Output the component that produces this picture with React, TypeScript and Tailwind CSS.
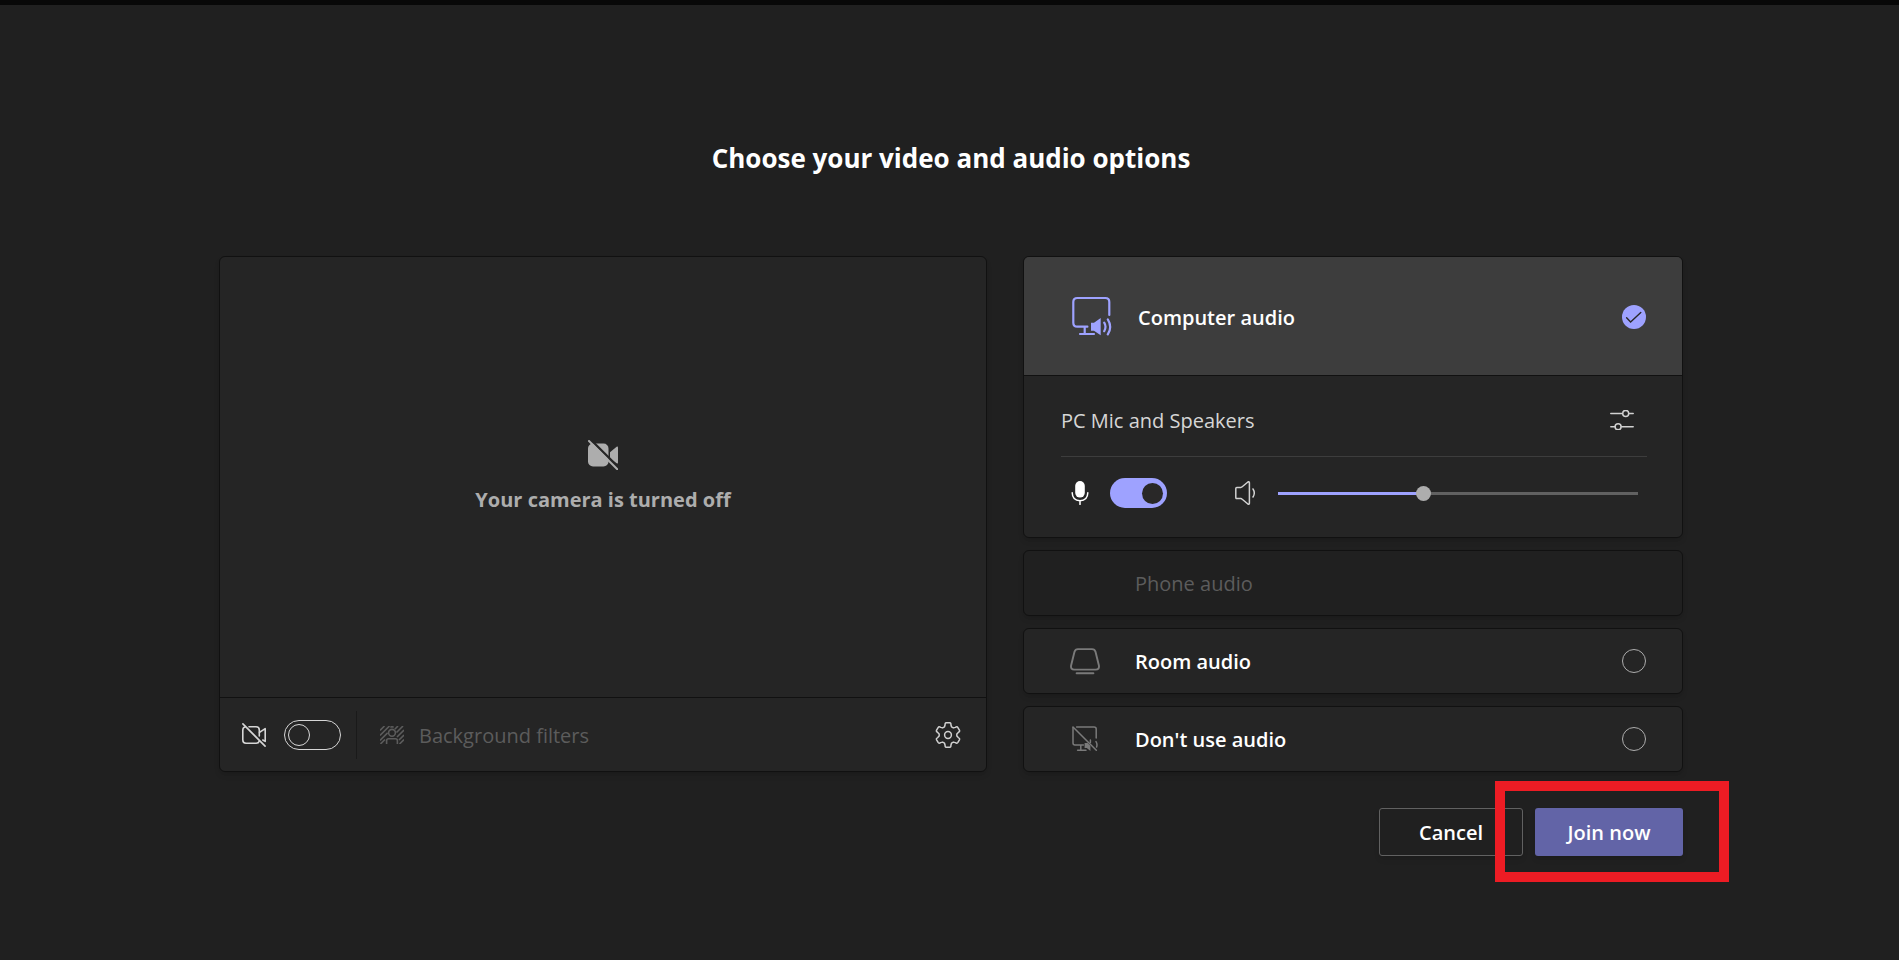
import { useState, type ReactNode } from "react";

function CameraOffFilled() {
  return (
    <svg width="30" height="30" viewBox="0 0 30 30" aria-hidden="true">
      <rect x="0" y="3.5" width="20.5" height="23" rx="5" fill="#adadad" />
      <path d="M22 12.2 28.6 6.8Q30 6 30 7.6V22.6Q30 24.2 28.6 23.3L22 18.5Z" fill="#adadad" />
      <path d="M2.5 -.5 30.5 27.5" stroke="#252525" strokeWidth="2.4" />
      <path d="M1 1 29.3 29.3" stroke="#adadad" strokeWidth="2" strokeLinecap="round" />
    </svg>
  );
}

function CameraOff() {
  return (
    <svg width="24" height="24" viewBox="0 0 24 24" fill="none" stroke="#d6d6d6" strokeWidth="1.6" strokeLinecap="round" strokeLinejoin="round" aria-hidden="true">
      <path d="M.9 .9 23.1 23.1" />
      <path d="M3 4Q.8 4.6 .8 7V17Q.8 20.2 4 20.2H14.2Q16.6 20.2 17.2 18.2" />
      <path d="M7 3.8H14Q17.3 3.8 17.3 7V13" />
      <path d="M17.5 9.4 23.2 5.6V18.4L20.8 17" />
    </svg>
  );
}

function BackgroundFilters() {
  return (
    <svg width="24" height="18" viewBox="0 0 24 18" fill="none" stroke="#5c5c5c" strokeWidth="1.6" aria-hidden="true">
      <path d="M0 4.5 4.5 0M0 9.5 9.5 0M0 14.5 7.6 6.9M.5 18 5 13.5M14.8 3.2 18 0M16.5 6.5 23 0M17 11 24 4M19 14 24 9M19.5 18 24 13.5" />
      <path d="M10.4 1.4Q12 .2 13.6 1.4" />
      <circle cx="12" cy="6.8" r="3.4" />
      <path d="M6.6 18V14.8Q6.6 12.8 8.6 12.8H15.4Q17.4 12.8 17.4 14.8V18" />
    </svg>
  );
}

function gearOutline() {
  const point = (radius: number, degrees: number) => {
    const a = (degrees * Math.PI) / 180;
    return `${(13 + radius * Math.cos(a)).toFixed(2)} ${(13 + radius * Math.sin(a)).toFixed(2)}`;
  };
  let d = "";
  for (let i = 0; i < 6; i++) {
    const a = i * 60 - 90;
    d += `${i === 0 ? "M" : "L"}${point(8.9, a - 23)}L${point(10.6, a - 16)}Q${point(12.6, a - 14)} ${point(12.4, a - 7)}L${point(12.4, a + 7)}Q${point(12.6, a + 14)} ${point(10.6, a + 16)}L${point(8.9, a + 23)}`;
  }
  return d + "Z";
}

function Gear() {
  return (
    <svg width="26" height="26" viewBox="0 0 26 26" fill="none" stroke="#d1d1d1" strokeWidth="1.5" strokeLinejoin="round" aria-hidden="true">
      <path d={gearOutline()} />
      <circle cx="13" cy="13" r="3.4" />
    </svg>
  );
}

function ComputerAudio() {
  return (
    <svg width="42" height="42" viewBox="0 0 42 42" fill="none" stroke="#9ea2ff" strokeWidth="2.2" strokeLinecap="round" aria-hidden="true">
      <path d="M38.3 19V6Q38.3 2 34.3 2H6.3Q2.3 2 2.3 6V26.7Q2.3 30.7 6.3 30.7H16.4" />
      <path d="M13.7 31V37.5M9 38H23" />
      <path d="M20 26.7H23L29.7 22V39.3L23 34.7H20Z" fill="#9ea2ff" stroke="none" />
      <path d="M33.2 26.6Q35.8 30.8 33.2 35.2M36.8 23.4Q41.6 31 36.8 38.4" />
    </svg>
  );
}

function RoomAudio() {
  return (
    <svg width="30" height="27" viewBox="0 0 30 27" fill="none" stroke="#7a7a7a" strokeWidth="1.9" strokeLinecap="round" aria-hidden="true">
      <path d="M8 1.1H22Q24.8 1.1 25.5 3.8L28.9 17.4Q29.6 21.6 25.6 21.6H4.4Q.4 21.6 1.1 17.4L4.5 3.8Q5.2 1.1 8 1.1Z" />
      <path d="M6.6 25.2H23.4" />
    </svg>
  );
}

function NoAudio() {
  return (
    <svg width="26" height="26" viewBox="0 0 26 26" fill="none" stroke="#7a7a7a" strokeWidth="1.5" strokeLinecap="round" aria-hidden="true">
      <path d="M1 1 24.3 24.3" />
      <path d="M4.6 1H22Q24.2 1 24.2 3V12" />
      <path d="M1 1.5V17Q1 19 3 19H11.4M8.8 19V24M5.6 24.2H14" />
      <path d="M12.6 17H15.6L18.4 19.8V25L14.8 22H12.6Z" fill="#7a7a7a" stroke="none" />
      <path d="M18.4 14V16.4M24 15.6Q25.6 18 24.6 21" />
    </svg>
  );
}

function DeviceSettings() {
  return (
    <svg width="24" height="20" viewBox="0 0 24 20" fill="none" stroke="#d1d1d1" strokeWidth="1.5" strokeLinecap="round" aria-hidden="true">
      <path d="M.8 3.4H12.4M19 3.4H23.2M.8 16.8H4.8M11.4 16.8H23.2" />
      <circle cx="15.7" cy="3.4" r="3" />
      <circle cx="8.1" cy="16.8" r="3" />
    </svg>
  );
}

function Microphone() {
  return (
    <svg width="18" height="24" viewBox="0 0 18 24" fill="none" stroke="#fff" strokeWidth="1.5" strokeLinecap="round" aria-hidden="true">
      <rect x="4.2" y="0" width="9.6" height="16.6" rx="4.8" fill="#fff" stroke="none" />
      <path d="M1.2 11.8Q1.4 19.6 9 19.8Q16.6 19.6 16.8 11.8M9 20V23.4" />
    </svg>
  );
}

function Speaker() {
  return (
    <svg width="22" height="24" viewBox="0 0 22 24" fill="none" stroke="#d1d1d1" strokeWidth="1.5" strokeLinecap="round" strokeLinejoin="round" aria-hidden="true">
      <path d="M1.8 6.4H5.8Q6.6 6.4 7.2 5.8L12.9 1Q14.4 .2 14.4 1.8V22.2Q14.4 23.8 12.9 23L7.2 18.2Q6.6 17.6 5.8 17.6H1.8Q.8 17.6 .8 16.6V7.4Q.8 6.4 1.8 6.4Z" />
      <path d="M18 8Q20.6 12 18 16" />
    </svg>
  );
}

function CheckedMark() {
  return (
    <svg width="24" height="24" viewBox="0 0 24 24" fill="none" aria-hidden="true">
      <circle cx="12" cy="12" r="12" fill="#9ea2ff" />
      <path d="M4.6 12.8 8.6 17 18.8 7.4" stroke="#292828" strokeWidth="1.4" strokeLinecap="round" />
    </svg>
  );
}

function Toggle({ label, checked, onChange }: { label: string; checked: boolean; onChange: (value: boolean) => void }) {
  return (
    <button
      type="button"
      role="switch"
      aria-label={label}
      aria-checked={checked}
      onClick={() => onChange(!checked)}
      className={
        checked
          ? "flex h-[30px] w-[57px] shrink-0 items-center justify-end rounded-full bg-[#9ea2ff] px-1"
          : "flex h-[30px] w-[57px] shrink-0 items-center rounded-full border border-[#d6d6d6] px-[3px]"
      }
    >
      <span className={checked ? "size-[21px] rounded-full bg-[#292828]" : "size-[22px] rounded-full border border-[#d6d6d6]"} />
    </button>
  );
}

function AudioOption({
  label,
  value,
  selected,
  disabled = false,
  icon,
  onSelect,
}: {
  label: string;
  value: string;
  selected: string;
  disabled?: boolean;
  icon?: ReactNode;
  onSelect: (value: string) => void;
}) {
  const checked = selected === value;
  return (
    <label
      className={
        disabled
          ? "flex h-[66px] items-center rounded-md border border-[#111] bg-[#202020] pr-9 pl-[42px] text-[#5c5c5c] shadow-md"
          : "flex h-[66px] items-center rounded-md border border-[#111] bg-[#252525] pr-9 pl-[42px] font-semibold text-white shadow-md"
      }
    >
      <span className="flex w-[38px] shrink-0 justify-center">{icon}</span>
      <span className="grow pt-0.5 pl-[31px]">{label}</span>
      <input
        type="radio"
        name="audio"
        value={value}
        checked={checked}
        disabled={disabled}
        onChange={() => onSelect(value)}
        className="size-6 appearance-none rounded-full border border-[#adadad] disabled:invisible"
      />
    </label>
  );
}

export default function App() {
  const [camera, setCamera] = useState(false);
  const [mic, setMic] = useState(true);
  const [volume, setVolume] = useState(40);
  const [audio, setAudio] = useState("computer");

  return (
    <div className="min-h-screen border-t-[5px] border-[#080808] bg-[#202020] pb-10 pl-[3px] font-['Open_Sans','Noto_Sans',sans-serif] text-[20px] leading-7 text-white">
      <main className="mx-auto max-w-[1464px] pt-[135px]">
        <h1 className="text-center text-[26px] leading-9 font-bold">Choose your video and audio options</h1>

        <div className="mt-20 flex gap-9">
          <section aria-label="Video" className="flex grow flex-col rounded-md border border-[#111] bg-[#252525] shadow-md">
            <div className="flex grow flex-col items-center justify-center gap-4 font-bold text-[#adadad]">
              <CameraOffFilled />
              <p>Your camera is turned off</p>
            </div>
            <div className="flex h-[74px] items-center border-t border-[#111] pt-px pr-[25px] pl-[22px]">
              <CameraOff />
              <div className="ml-[18px] flex">
                <Toggle label="Camera" checked={camera} onChange={setCamera} />
              </div>
              <div className="ml-[15px] h-12 w-px bg-[#1a1a1a]" />
              <button type="button" disabled className="ml-[23px] flex items-center gap-[15px] text-[#5c5c5c]">
                <BackgroundFilters />
                <span className="pt-0.5">Background filters</span>
              </button>
              <button type="button" aria-label="Device settings" className="ml-auto">
                <Gear />
              </button>
            </div>
          </section>

          <section aria-label="Audio" className="flex w-[660px] shrink-0 flex-col gap-3">
            <div className="overflow-hidden rounded-md border border-[#111] bg-[#252525] shadow-md">
              <label className="flex h-[119px] items-center border-b border-[#111] bg-[#3d3d3d] pt-px pr-9 pl-[47px] font-semibold">
                <ComputerAudio />
                <span className="grow pt-0.5 pl-[25px]">Computer audio</span>
                <input
                  type="radio"
                  name="audio"
                  value="computer"
                  checked={audio === "computer"}
                  onChange={() => setAudio("computer")}
                  className="peer sr-only"
                />
                <span className="hidden peer-checked:block">
                  <CheckedMark />
                </span>
                <span className="block size-6 rounded-full border border-[#adadad] peer-checked:hidden" />
              </label>
              <div className="pr-[35px] pl-[37px]">
                <div className="flex h-[81px] items-center justify-between border-b border-[#3d3d3d] pt-3 pr-[13px] pb-1 text-[#d6d6d6]">
                  <span className="pt-0.5">PC Mic and Speakers</span>
                  <button type="button" aria-label="Audio device settings">
                    <DeviceSettings />
                  </button>
                </div>
                <div className="flex h-20 items-center pr-[9px] pb-2 pl-[10px]">
                  <Microphone />
                  <div className="ml-[21px] flex">
                    <Toggle label="Microphone" checked={mic} onChange={setMic} />
                  </div>
                  <div className="mr-[21px] ml-[68px]">
                    <Speaker />
                  </div>
                  <input
                    type="range"
                    aria-label="Volume"
                    min={0}
                    max={100}
                    value={volume}
                    onChange={(e) => setVolume(Number(e.target.value))}
                    style={{ backgroundImage: `linear-gradient(to right, #9ea2ff ${volume}%, #616161 ${volume}%)` }}
                    className="h-[15px] min-w-0 grow appearance-none bg-[length:100%_3px] bg-center bg-no-repeat [&::-webkit-slider-thumb]:size-[15px] [&::-webkit-slider-thumb]:appearance-none [&::-webkit-slider-thumb]:rounded-full [&::-webkit-slider-thumb]:bg-[#adadad]"
                  />
                </div>
              </div>
            </div>

            <AudioOption label="Phone audio" value="phone" selected={audio} onSelect={setAudio} disabled />
            <AudioOption label="Room audio" value="room" selected={audio} onSelect={setAudio} icon={<RoomAudio />} />
            <AudioOption label="Don't use audio" value="none" selected={audio} onSelect={setAudio} icon={<NoAudio />} />
          </section>
        </div>

        <div className="mt-9 flex justify-end gap-3 font-semibold">
          <button type="button" className="h-12 w-36 rounded-[3px] border border-[#616161] pt-0.5 shadow-md">
            Cancel
          </button>
          <div className="relative">
            <button type="button" className="h-12 w-[148px] rounded-[3px] bg-[#6264a7] pt-0.5 shadow-md">
              Join now
            </button>
            <div className="pointer-events-none absolute -top-[27px] -right-[46px] -bottom-[26px] -left-10 border-[10px] border-[#ed1c24]" />
          </div>
        </div>
      </main>
    </div>
  );
}
